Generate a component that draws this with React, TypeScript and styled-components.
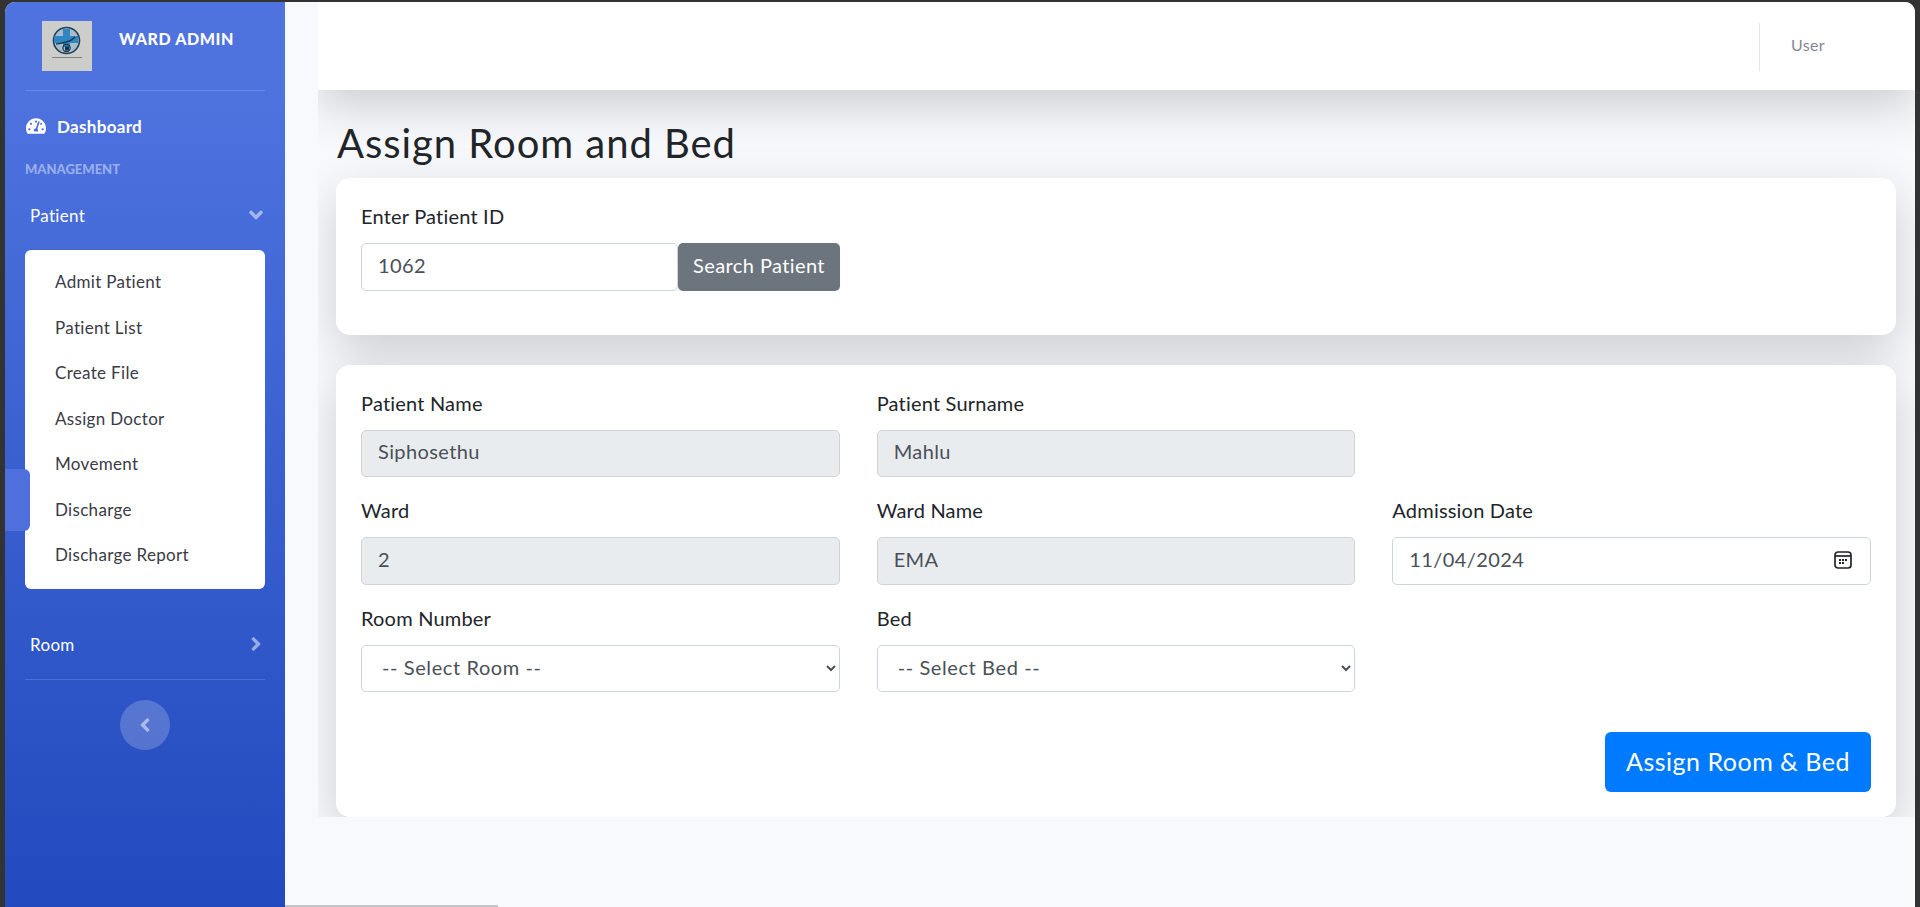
import React from "react";
import styled, { createGlobalStyle } from "styled-components";
import { FaAngleDown, FaAngleLeft, FaAngleRight, FaTachometerAlt } from "react-icons/fa";

const subItems = ["Admit Patient", "Patient List", "Create File", "Assign Doctor", "Movement", "Discharge", "Discharge Report"];

const App: React.FC = () => {
    return (
        <Frame>
            <GlobalStyle />
            <Shell>
                <Sidebar>
                    <Brand>
                        <Logo />
                        <BrandText>Ward Admin</BrandText>
                    </Brand>
                    <Divider />
                    <DashboardLink>
                        <FaTachometerAlt size={20} />
                        <span>Dashboard</span>
                    </DashboardLink>
                    <Heading>Management</Heading>
                    <NavRow>
                        Patient
                        <Caret><FaAngleDown size={22} /></Caret>
                    </NavRow>
                    <SubMenu>
                        {subItems.map((item) => (
                            <SubItem key={item}>{item}</SubItem>
                        ))}
                    </SubMenu>
                    <RoomRow>
                        Room
                        <Caret><FaAngleRight size={22} /></Caret>
                    </RoomRow>
                    <Divider />
                    <ToggleButton aria-label="Toggle sidebar"><FaAngleLeft size={22} /></ToggleButton>
                    <SideTab />
                </Sidebar>
                <Main>
                    <Clip>
                        <Topbar>
                            <UserBox>User</UserBox>
                        </Topbar>
                        <Container>
                            <Title>Assign Room and Bed</Title>
                            <Card>
                                <FormGroup>
                                    <Label>Enter Patient ID</Label>
                                    <SearchRow>
                                        <Input type="text" defaultValue="1062" />
                                        <SearchButton>Search Patient</SearchButton>
                                    </SearchRow>
                                </FormGroup>
                            </Card>
                            <Card>
                                <FormGrid>
                                    <FormGroup>
                                        <Label>Patient Name</Label>
                                        <Input type="text" defaultValue="Siphosethu" disabled />
                                    </FormGroup>
                                    <FormGroup>
                                        <Label>Patient Surname</Label>
                                        <Input type="text" defaultValue="Mahlu" disabled />
                                    </FormGroup>
                                    <div />
                                    <FormGroup>
                                        <Label>Ward</Label>
                                        <Input type="text" defaultValue="2" disabled />
                                    </FormGroup>
                                    <FormGroup>
                                        <Label>Ward Name</Label>
                                        <Input type="text" defaultValue="EMA" disabled />
                                    </FormGroup>
                                    <FormGroup>
                                        <Label>Admission Date</Label>
                                        <DateBox>
                                            <DateInput type="date" defaultValue="2024-11-04" />
                                            <CalendarIcon />
                                        </DateBox>
                                    </FormGroup>
                                    <FormGroup>
                                        <Label>Room Number</Label>
                                        <Select defaultValue="">
                                            <option value="">-- Select Room --</option>
                                        </Select>
                                    </FormGroup>
                                    <FormGroup>
                                        <Label>Bed</Label>
                                        <Select defaultValue="">
                                            <option value="">-- Select Bed --</option>
                                        </Select>
                                    </FormGroup>
                                </FormGrid>
                                <Actions>
                                    <AssignButton>Assign Room &amp; Bed</AssignButton>
                                </Actions>
                            </Card>
                        </Container>
                    </Clip>
                </Main>
                <ScrollThumb />
            </Shell>
        </Frame>
    );
};

const Logo = () => (
    <svg width="50" height="50" viewBox="0 0 50 50" style={{ flexShrink: 0 }}>
        <rect width="50" height="50" fill="#cdcdcb" />
        <circle cx="24.5" cy="19.5" r="13" fill="#a9bccb" stroke="#1f3f5c" strokeWidth="1.6" />
        <path d="M21 8h7v7h8v7h-8v4h-7v-4h-9v-7h9z" fill="#2f86c0" />
        <path d="M14 23c6-1 14-1 19-7" fill="none" stroke="#17344e" strokeWidth="1.3" />
        <circle cx="24.5" cy="27" r="3.6" fill="none" stroke="#17344e" strokeWidth="1.2" />
        <rect x="23" y="25.5" width="4" height="4" fill="#17344e" />
        <rect x="10" y="36" width="30" height="1" fill="#7f8183" />
    </svg>
);

const CalendarIcon = () => (
    <CalendarSvg width="18" height="18" viewBox="0 0 18 18" fill="none">
        <rect x="1" y="1" width="16" height="16" rx="3" stroke="#212529" strokeWidth="1.7" />
        <path d="M1 5h16" stroke="#212529" strokeWidth="1.7" />
        <path d="M5 8h2v2H5zM8 8h2v2H8zM11 8h2v2h-2zM5 11h2v2H5zM8 11h2v2H8z" fill="#212529" />
    </CalendarSvg>
);

export default App;

const GlobalStyle = createGlobalStyle`
    html, body {
        margin: 0;
        padding: 0;
        height: 100%;
        overflow: hidden;
    }
    * {
        box-sizing: border-box;
    }
    body {
        font-family: "Lato", "Open Sans", sans-serif;
        letter-spacing: 0.32px;
        color: #212529;
    }
`;

const Frame = styled.div`
    height: 100vh;
    padding: 2px 5px 0;
    background: #333333;
`;

const Shell = styled.div`
    position: relative;
    display: flex;
    height: 100%;
    background: #f8f9fc;
    border-radius: 10px 10px 0 0;
    overflow: hidden;
`;

const Sidebar = styled.nav`
    position: relative;
    width: 280px;
    flex-shrink: 0;
    background: linear-gradient(180deg, #4e73df 10%, #224abe 100%);
    color: #fff;
`;

const Brand = styled.div`
    display: flex;
    align-items: flex-start;
    height: 88px;
    padding: 19px 0 0 37px;
`;

const BrandText = styled.div`
    margin-left: 27px;
    font-size: 16px;
    font-weight: 900;
    line-height: 36px;
    letter-spacing: 0.6px;
    text-transform: uppercase;
`;

const Divider = styled.hr`
    margin: 0 20px;
    border: 0;
    border-top: 1px solid rgba(255, 255, 255, 0.15);
`;

const DashboardLink = styled.div`
    display: flex;
    align-items: center;
    gap: 11px;
    height: 70px;
    padding-left: 21px;
    font-size: 17px;
    font-weight: 700;
`;

const Heading = styled.div`
    padding-left: 20px;
    font-size: 13px;
    font-weight: 900;
    line-height: 16px;
    letter-spacing: 0;
    color: rgba(255, 255, 255, 0.45);
    text-transform: uppercase;
`;

const NavRow = styled.div`
    display: flex;
    align-items: center;
    justify-content: space-between;
    height: 50px;
    margin-top: 13px;
    padding: 0 18px 0 25px;
    font-size: 17px;
`;

const RoomRow = styled(NavRow)`
    margin-top: 30px;
    margin-bottom: 10px;
`;

const Caret = styled.span`
    display: flex;
    color: rgba(255, 255, 255, 0.5);
`;

const SubMenu = styled.div`
    height: 339px;
    margin: 10px 20px 0;
    padding: 9px 0 11px;
    background: #fff;
    border-radius: 6px;
`;

const SubItem = styled.div`
    display: flex;
    align-items: center;
    height: 45.5px;
    padding-left: 30px;
    font-size: 17px;
    color: #3a3b45;
`;

const ToggleButton = styled.button`
    display: flex;
    align-items: center;
    justify-content: center;
    width: 50px;
    height: 50px;
    margin: 20px auto 0;
    padding: 0;
    border: 0;
    border-radius: 50%;
    background: rgba(255, 255, 255, 0.2);
    color: rgba(255, 255, 255, 0.5);
`;

const SideTab = styled.div`
    position: absolute;
    top: 467px;
    left: 0;
    width: 25px;
    height: 62px;
    background: #4e6fdc;
    border-radius: 0 6px 6px 0;
`;

const ScrollThumb = styled.div`
    position: absolute;
    bottom: 0;
    left: 280px;
    width: 213px;
    height: 2px;
    background: #c4c5c8;
`;

const Main = styled.main`
    flex: 1;
    min-width: 0;
    padding-left: 33px;
`;

const Clip = styled.div`
    overflow: hidden;
`;

const Topbar = styled.header`
    display: flex;
    justify-content: flex-end;
    align-items: center;
    height: 88px;
    margin-bottom: 30px;
    padding-right: 61px;
    background: #fff;
    box-shadow: 0 16px 48px rgba(0, 0, 0, 0.175);
`;

const UserBox = styled.div`
    width: 95px;
    height: 48px;
    margin-top: 2px;
    padding-left: 31px;
    border-left: 1px solid #e3e6f0;
    font-size: 16px;
    line-height: 44px;
    color: #858796;
`;

const Container = styled.div`
    padding: 0 19px 0 18px;
`;

const Title = styled.h2`
    margin: 0 0 12px;
    padding-left: 1px;
    font-size: 40px;
    font-weight: 400;
    line-height: 46px;
    letter-spacing: 0.95px;
`;

const Card = styled.section`
    margin-bottom: 29.5px;
    padding: 25px 25px 24.5px;
    background: #fff;
    border-radius: 14px;
    box-shadow: 0 16px 48px rgba(0, 0, 0, 0.175);

    &:last-child {
        margin-bottom: 0;
    }
`;

const FormGrid = styled.div`
    display: grid;
    grid-template-columns: repeat(3, 1fr);
    column-gap: 37px;
`;

const FormGroup = styled.div`
    margin-bottom: 20px;
`;

const Label = styled.label`
    display: block;
    margin-bottom: 13px;
    font-size: 20px;
    line-height: 27px;
    letter-spacing: 0.2px;
`;

const SearchRow = styled.div`
    display: flex;
    width: 479px;
`;

const Input = styled.input`
    display: block;
    width: 100%;
    height: 47.5px;
    padding: 4px 15px 8px 16px;
    border: 1px solid #ced4da;
    border-radius: 5px;
    background: #fff;
    font-family: inherit;
    font-size: 20px;
    letter-spacing: 0.4px;
    color: #495057;

    &:disabled {
        background: #e9ecef;
    }
`;

const DateBox = styled.div`
    position: relative;
`;

const DateInput = styled(Input)`
    &::-webkit-calendar-picker-indicator {
        opacity: 0;
    }
    &::-webkit-datetime-edit-month-field,
    &::-webkit-datetime-edit-day-field,
    &::-webkit-datetime-edit-year-field,
    &::-webkit-datetime-edit-text {
        padding: 0;
    }
`;

const CalendarSvg = styled.svg`
    position: absolute;
    top: 14px;
    right: 19px;
    pointer-events: none;
`;

const Select = styled.select`
    display: block;
    width: 100%;
    height: 47.5px;
    padding: 5px 15px 7px 16px;
    border: 1px solid #ced4da;
    border-radius: 5px;
    background: #fff;
    font-family: inherit;
    font-size: 20px;
    letter-spacing: 0.6px;
    color: #495057;
`;

const SearchButton = styled.button`
    flex-shrink: 0;
    width: 162px;
    height: 47.5px;
    padding: 0 0 4px;
    border: 0;
    border-radius: 5px;
    background: #6c757d;
    font-family: inherit;
    font-size: 20px;
    letter-spacing: 0.4px;
    color: #fff;
`;

const Actions = styled.div`
    display: flex;
    justify-content: flex-end;
    margin-top: 20px;
`;

const AssignButton = styled.button`
    height: 60px;
    padding: 0 21px 3px;
    border: 0;
    border-radius: 6px;
    background: #007bff;
    font-family: inherit;
    font-size: 25px;
    letter-spacing: 0.5px;
    color: #fff;
`;
